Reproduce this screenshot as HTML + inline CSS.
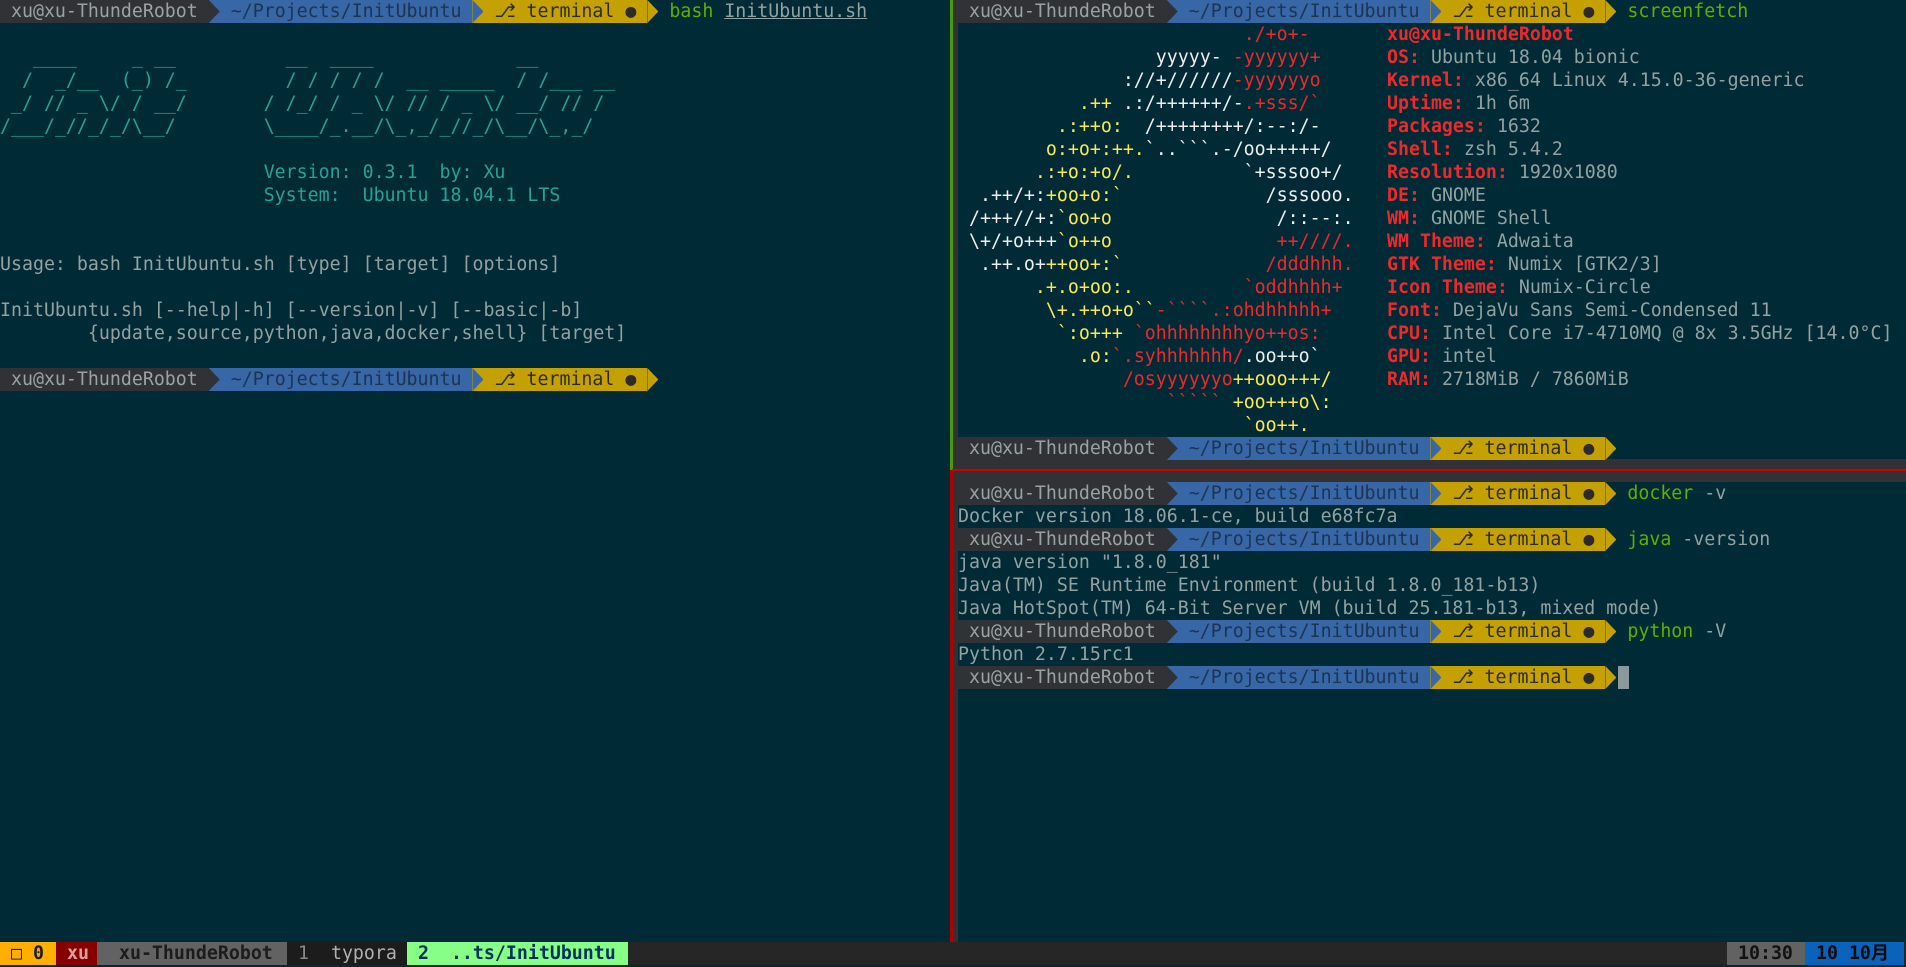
<!DOCTYPE html>
<html><head><meta charset="utf-8">
<style>
*{margin:0;padding:0;box-sizing:border-box}
html,body{width:1906px;height:967px;overflow:hidden;background:#002a36}
body{font-family:"DejaVu Sans Mono","Liberation Mono","Noto Sans CJK SC",monospace;font-size:18.25px;color:#93a1a1;position:relative}
.p{position:absolute;white-space:normal;line-height:23px}
.l{display:block;height:23px;white-space:pre;line-height:23px}
.g,.b,.y{display:inline-block;height:23px;vertical-align:top}
.g{background:#303235;color:#9aa3a3}
.b{background:#3767a6;color:#1e3352}
.y{background:#c4a000;color:#2b2b2b}
.ar{display:inline-block;width:11px;height:23px;vertical-align:top;position:relative}
.ar i{position:absolute;left:0;top:0;width:11px;height:23px;clip-path:polygon(0 0,100% 50%,0 100%)}
.gr{color:#5faf00}
.c{color:#2aa198}
.w{color:#eeeeec}
.r{color:#ef2929}
.yy{color:#fce94f}
.rb{color:#ef2929;font-weight:bold}
u{text-decoration:underline}
.sb{position:absolute;top:0;height:23px;white-space:pre;line-height:23px;overflow:hidden}
</style></head><body>

<div class="p" style="left:0;top:0;width:950px">
<span class="l"><span class="g"> xu@xu-ThundeRobot </span><span class="ar" style="background:#3767a6"><i style="background:#303235"></i></span><span class="b"> ~/Projects/InitUbuntu </span><span class="ar" style="background:#c4a000"><i style="background:#3767a6"></i></span><span class="y"> ⎇ terminal ● </span><span class="ar"><i style="background:#c4a000"></i></span> <span class="gr">bash</span> <u>InitUbuntu.sh</u></span>
<span class="l"> </span>
<span class="l c">   ____     _ __          __  ____             __</span>
<span class="l c">  /  _/__  (_) /_         / / / / /  __ _____  / /___ __</span>
<span class="l c"> _/ // _ \/ / __/       / /_/ / _ \/ // / _ \/ __/ // /</span>
<span class="l c">/___/_//_/_/\__/        \____/_.__/\_,_/_//_/\__/\_,_/</span>
<span class="l"> </span>
<span class="l c">                        Version: 0.3.1  by: Xu</span>
<span class="l c">                        System:  Ubuntu 18.04.1 LTS</span>
<span class="l"> </span>
<span class="l"> </span>
<span class="l">Usage: bash InitUbuntu.sh [type] [target] [options]</span>
<span class="l"> </span>
<span class="l">InitUbuntu.sh [--help|-h] [--version|-v] [--basic|-b]</span>
<span class="l">        {update,source,python,java,docker,shell} [target]</span>
<span class="l"> </span>
<span class="l"><span class="g"> xu@xu-ThundeRobot </span><span class="ar" style="background:#3767a6"><i style="background:#303235"></i></span><span class="b"> ~/Projects/InitUbuntu </span><span class="ar" style="background:#c4a000"><i style="background:#3767a6"></i></span><span class="y"> ⎇ terminal ● </span><span class="ar"><i style="background:#c4a000"></i></span></span>
</div>

<div style="position:absolute;left:950px;top:0;width:3px;height:470px;background:#4e9a06"></div>
<div style="position:absolute;left:950px;top:470px;width:3px;height:472px;background:#b00000"></div>
<div style="position:absolute;left:953px;top:0;width:5px;height:942px;background:#303235"></div>
<div style="position:absolute;left:953px;top:459px;width:953px;height:23px;background:#303235"></div>
<div style="position:absolute;left:952px;top:469px;width:954px;height:2px;background:#d00000"></div>

<div class="p" style="left:958px;top:0">
<span class="l"><span class="g"> xu@xu-ThundeRobot </span><span class="ar" style="background:#3767a6"><i style="background:#303235"></i></span><span class="b"> ~/Projects/InitUbuntu </span><span class="ar" style="background:#c4a000"><i style="background:#3767a6"></i></span><span class="y"> ⎇ terminal ● </span><span class="ar"><i style="background:#c4a000"></i></span> <span class="gr">screenfetch</span></span>
<span class="l">                          <span class="r">./+o+-</span></span>
<span class="l">                  <span class="w">yyyyy- </span><span class="r">-yyyyyy+</span></span>
<span class="l">               <span class="w">://+//////</span><span class="r">-yyyyyyo</span></span>
<span class="l">           <span class="yy">.++ </span><span class="w">.:/++++++/-</span><span class="r">.+sss/&#96;</span></span>
<span class="l">         <span class="yy">.:++o:  </span><span class="w">/++++++++/:--:/-</span></span>
<span class="l">        <span class="yy">o:+o+:++.</span><span class="w">&#96;..&#96;&#96;&#96;.-/oo+++++/</span></span>
<span class="l">       <span class="yy">.:+o:+o/.</span><span class="w">          &#96;+sssoo+/</span></span>
<span class="l">  <span class="w">.++/+:</span><span class="yy">+oo+o:&#96;</span><span class="w">             /sssooo.</span></span>
<span class="l"> <span class="w">/+++//+:</span><span class="yy">&#96;oo+o</span><span class="w">               /::--:.</span></span>
<span class="l"> <span class="w">\+/+o+++</span><span class="yy">&#96;o++o</span><span class="r">               ++////.</span></span>
<span class="l">  <span class="w">.++.o+</span><span class="yy">++oo+:&#96;</span><span class="r">             /dddhhh.</span></span>
<span class="l">       <span class="yy">.+.o+oo:.</span><span class="r">          &#96;oddhhhh+</span></span>
<span class="l">        <span class="yy">\+.++o+o&#96;&#96;</span><span class="r">-&#96;&#96;&#96;&#96;.:ohdhhhhh+</span></span>
<span class="l">         <span class="yy">&#96;:o+++ </span><span class="r">&#96;ohhhhhhhhyo++os:</span></span>
<span class="l">           <span class="yy">.o:</span><span class="r">&#96;.syhhhhhhh/</span><span class="w">.oo++o&#96;</span></span>
<span class="l">               <span class="r">/osyyyyyyo</span><span class="yy">++ooo+++/</span></span>
<span class="l">                   <span class="r">&#96;&#96;&#96;&#96;&#96; </span><span class="yy">+oo+++o\:</span></span>
<span class="l">                          <span class="yy">&#96;oo++.</span></span>
<span class="l"><span class="g"> xu@xu-ThundeRobot </span><span class="ar" style="background:#3767a6"><i style="background:#303235"></i></span><span class="b"> ~/Projects/InitUbuntu </span><span class="ar" style="background:#c4a000"><i style="background:#3767a6"></i></span><span class="y"> ⎇ terminal ● </span><span class="ar"><i style="background:#c4a000"></i></span></span>
</div>

<div class="p" style="left:1387px;top:23px">
<span class="l rb">xu@xu-ThundeRobot</span>
<span class="l"><span class="rb">OS:</span> Ubuntu 18.04 bionic</span>
<span class="l"><span class="rb">Kernel:</span> x86_64 Linux 4.15.0-36-generic</span>
<span class="l"><span class="rb">Uptime:</span> 1h 6m</span>
<span class="l"><span class="rb">Packages:</span> 1632</span>
<span class="l"><span class="rb">Shell:</span> zsh 5.4.2</span>
<span class="l"><span class="rb">Resolution:</span> 1920x1080</span>
<span class="l"><span class="rb">DE:</span> GNOME</span>
<span class="l"><span class="rb">WM:</span> GNOME Shell</span>
<span class="l"><span class="rb">WM Theme:</span> Adwaita</span>
<span class="l"><span class="rb">GTK Theme:</span> Numix [GTK2/3]</span>
<span class="l"><span class="rb">Icon Theme:</span> Numix-Circle</span>
<span class="l"><span class="rb">Font:</span> DejaVu Sans Semi-Condensed 11</span>
<span class="l"><span class="rb">CPU:</span> Intel Core i7-4710MQ @ 8x 3.5GHz [14.0°C]</span>
<span class="l"><span class="rb">GPU:</span> intel</span>
<span class="l"><span class="rb">RAM:</span> 2718MiB / 7860MiB</span>
</div>

<div class="p" style="left:958px;top:482px">
<span class="l"><span class="g"> xu@xu-ThundeRobot </span><span class="ar" style="background:#3767a6"><i style="background:#303235"></i></span><span class="b"> ~/Projects/InitUbuntu </span><span class="ar" style="background:#c4a000"><i style="background:#3767a6"></i></span><span class="y"> ⎇ terminal ● </span><span class="ar"><i style="background:#c4a000"></i></span> <span class="gr">docker</span> -v</span>
<span class="l">Docker version 18.06.1-ce, build e68fc7a</span>
<span class="l"><span class="g"> xu@xu-ThundeRobot </span><span class="ar" style="background:#3767a6"><i style="background:#303235"></i></span><span class="b"> ~/Projects/InitUbuntu </span><span class="ar" style="background:#c4a000"><i style="background:#3767a6"></i></span><span class="y"> ⎇ terminal ● </span><span class="ar"><i style="background:#c4a000"></i></span> <span class="gr">java</span> -version</span>
<span class="l">java version "1.8.0_181"</span>
<span class="l">Java(TM) SE Runtime Environment (build 1.8.0_181-b13)</span>
<span class="l">Java HotSpot(TM) 64-Bit Server VM (build 25.181-b13, mixed mode)</span>
<span class="l"><span class="g"> xu@xu-ThundeRobot </span><span class="ar" style="background:#3767a6"><i style="background:#303235"></i></span><span class="b"> ~/Projects/InitUbuntu </span><span class="ar" style="background:#c4a000"><i style="background:#3767a6"></i></span><span class="y"> ⎇ terminal ● </span><span class="ar"><i style="background:#c4a000"></i></span> <span class="gr">python</span> -V</span>
<span class="l">Python 2.7.15rc1</span>
<span class="l"><span class="g"> xu@xu-ThundeRobot </span><span class="ar" style="background:#3767a6"><i style="background:#303235"></i></span><span class="b"> ~/Projects/InitUbuntu </span><span class="ar" style="background:#c4a000"><i style="background:#3767a6"></i></span><span class="y"> ⎇ terminal ● </span><span class="ar"><i style="background:#c4a000"></i></span> </span>
</div>
<div style="position:absolute;left:1618px;top:666px;width:11px;height:23px;background:#8a9a9c"></div>

<div style="position:absolute;left:0;top:942px;width:1906px;height:23px;background:#262626;font-weight:bold">
<span class="sb" style="left:0;width:56px;background:#ffaf00;color:#1c1c1c"> □ 0</span>
<span class="sb" style="left:56px;width:41px;background:#870000;color:#d7a0a0"> xu</span>
<span class="sb" style="left:97px;width:190px;background:#626262;color:#1c1c1c">  xu-ThundeRobot</span>
<span class="sb" style="left:287px;width:120px;background:#1c1c1c;color:#8a8a8a;font-weight:normal"> 1  <span style="color:#b0b0b0">typora</span></span>
<span class="sb" style="left:407px;width:221px;background:#87ff87;color:#00305f"> 2  ..ts/InitUbuntu</span>
<span class="sb" style="left:1727px;width:78px;background:#626262;color:#121212"> 10:30</span>
<span class="sb" style="left:1805px;width:99px;background:#0a62ba;color:#0a0a0a"> 10 10月</span>
</div>
</body></html>
